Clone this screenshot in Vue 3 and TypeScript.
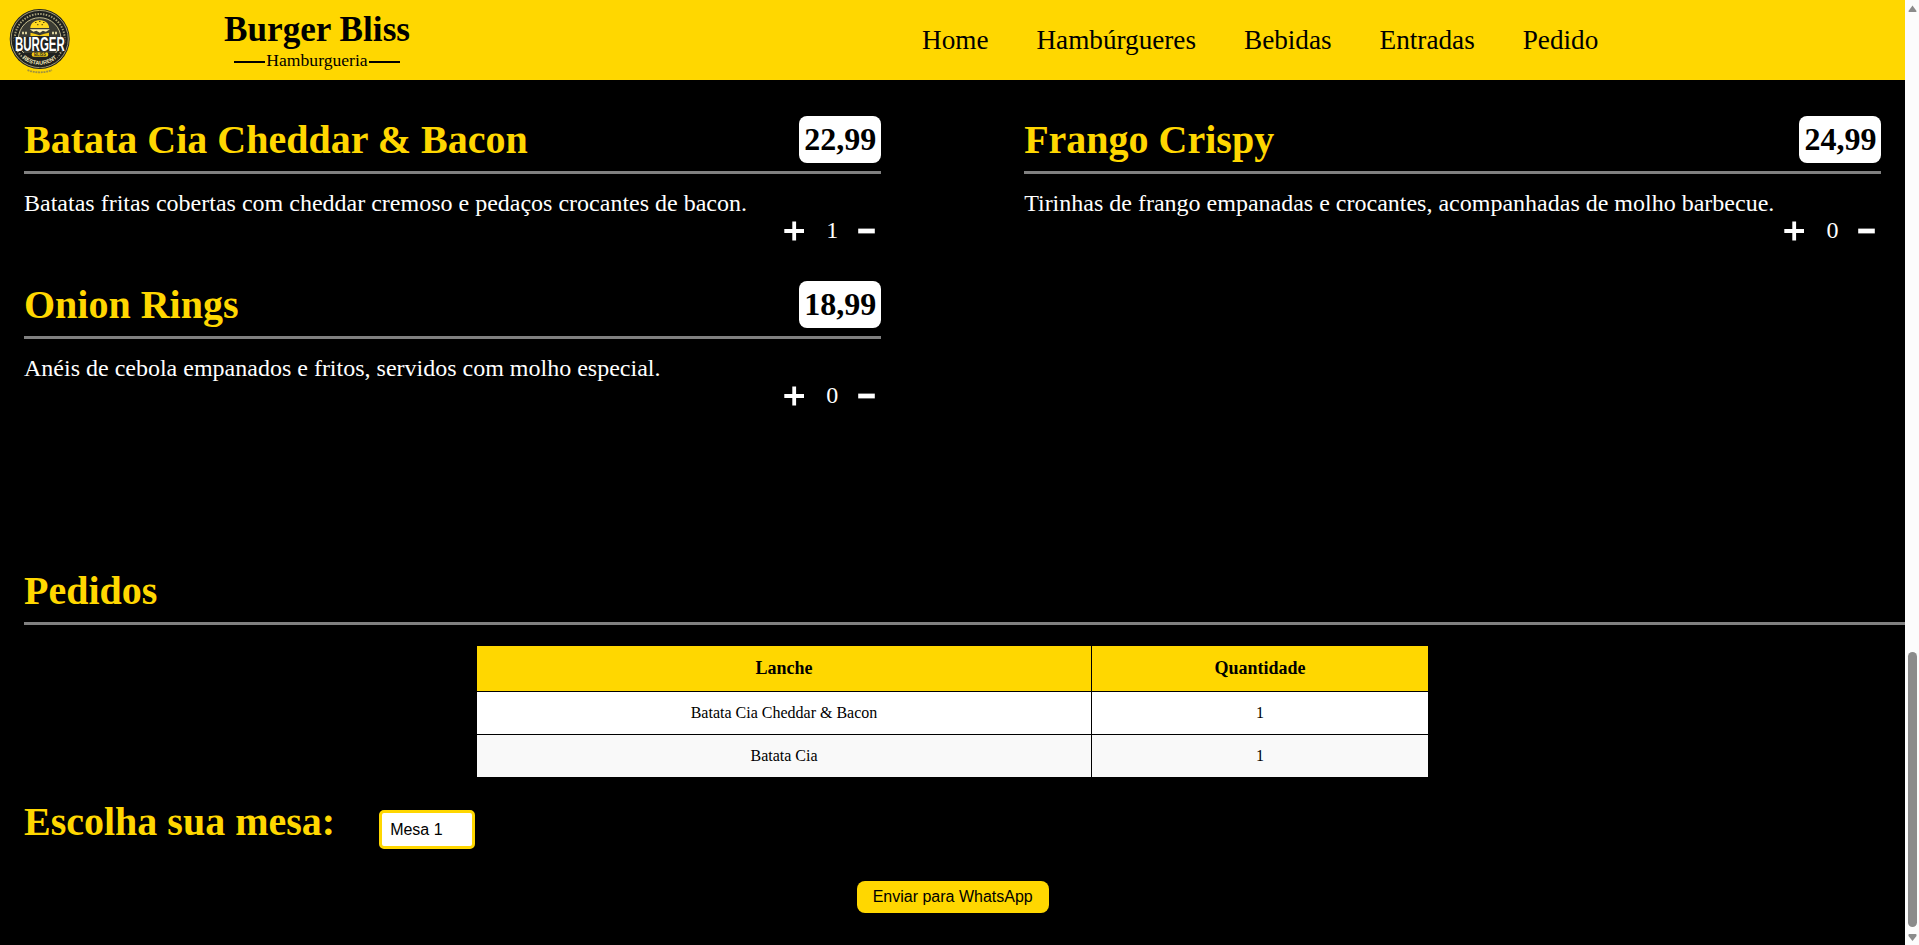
<script setup lang="ts">
import { ref } from 'vue'

interface Item {
  name: string
  price: string
  description: string
  quantity: number
}

interface Order {
  name: string
  quantity: number
}

const links: string[] = ['Home', 'Hambúrgueres', 'Bebidas', 'Entradas', 'Pedido']

const items = ref<Item[]>([
  {
    name: 'Batata Cia Cheddar & Bacon',
    price: '22,99',
    description: 'Batatas fritas cobertas com cheddar cremoso e pedaços crocantes de bacon.',
    quantity: 1,
  },
  {
    name: 'Frango Crispy',
    price: '24,99',
    description: 'Tirinhas de frango empanadas e crocantes, acompanhadas de molho barbecue.',
    quantity: 0,
  },
  {
    name: 'Onion Rings',
    price: '18,99',
    description: 'Anéis de cebola empanados e fritos, servidos com molho especial.',
    quantity: 0,
  },
])

const orders = ref<Order[]>([
  { name: 'Batata Cia Cheddar & Bacon', quantity: 1 },
  { name: 'Batata Cia', quantity: 1 },
])

const table = ref<string>('Mesa 1')

function change(item: Item, step: number): void {
  item.quantity = Math.max(0, item.quantity + step)
  const order = orders.value.find((o) => o.name === item.name)
  if (order) {
    order.quantity = item.quantity
  } else if (item.quantity > 0) {
    orders.value.push({ name: item.name, quantity: item.quantity })
  }
  orders.value = orders.value.filter((o) => o.quantity > 0)
}
</script>

<template>
  <div class="window">
    <div class="page">
      <header class="header">
        <svg class="logo" viewBox="0 0 80 80" width="80" height="80">
          <circle cx="39.7" cy="39" r="30" fill="#1f211f" />
          <circle cx="39.7" cy="39" r="28.6" fill="none" stroke="#d8cf9c" stroke-width="0.7" />
          <circle cx="39.7" cy="39" r="25" fill="none" stroke="#a39d78" stroke-width="2" stroke-dasharray="1.5 1.3" />
          <circle cx="39.7" cy="39" r="21.3" fill="#3a3b33" stroke="#d8cf9c" stroke-width="0.9" />
          <path d="M21 53l3.500 6 8 6.500 8 2 8-2 8-6.500 3.500-6z" fill="#1f211f" />
          <path d="M30.300 28c0-10.500 18.800-10.500 18.800 0z" fill="#ffd91f" />
          <path d="M35 22.500h1.500M39 21.500h1.500M43 22.500h1.500M37 24.700h1.500M41.500 24.700h1.500" stroke="#5a4b10" stroke-width="1" />
          <path d="M29.700 29.200h20.200l-4 2.500-3-1-3 2-3.500-2-3 1z" fill="#fff3b5" />
          <path d="M30.500 32.700l4 1 5 1.600 5-1.600 4.500-1v3.300h-18.500z" fill="#f5ca15" />
          <path d="M22 33h6M52 33h6" stroke="#d8cf9c" stroke-width="2.500" stroke-dasharray="2 1" />
          <path d="M14 37.500l25-1.300 26.500 1.300v13.200h-51.500z" fill="#1f211f" />
          <text class="logo-name" x="15" y="51.300" textLength="49.800" lengthAdjust="spacingAndGlyphs">BURGER</text>
          <rect x="31.700" y="52.200" width="16.500" height="4.600" rx="2" fill="#f2cb15" />
          <text class="logo-bliss" x="34" y="56.100" textLength="12" lengthAdjust="spacingAndGlyphs">BLISS</text>
          <path id="logo-bottom" d="M19.200 54.600a25.800 25.800 0 0 0 41 0" fill="none" />
          <text class="logo-ring">
            <textPath href="#logo-bottom" startOffset="50%" text-anchor="middle">RESTAURENT</textPath>
          </text>
          <path d="M27.500 70.200q12 4.200 24.500 0" fill="none" stroke="#a1933f" stroke-width="1.800" stroke-dasharray="2 0.700" />
        </svg>
        <div class="brand">
          <h1 class="brand-name">Burger Bliss</h1>
          <p class="brand-sub">Hamburgueria</p>
        </div>
        <nav class="nav">
          <a v-for="link in links" :key="link" class="nav-link">{{ link }}</a>
        </nav>
      </header>

      <main>
        <section class="menu">
          <article v-for="item in items" :key="item.name" class="item">
            <div class="item-head">
              <h2 class="title">{{ item.name }}</h2>
              <span class="price">{{ item.price }}</span>
            </div>
            <p class="description">{{ item.description }}</p>
            <div class="counter">
              <button class="step" aria-label="Adicionar" @click="change(item, 1)">
                <svg width="20" height="20" viewBox="0 0 20 20">
                  <path d="M0.300 10h19.700M10.200 0.500v19" stroke="#fff" stroke-width="3.800" />
                </svg>
              </button>
              <span class="quantity">{{ item.quantity }}</span>
              <button class="step" aria-label="Remover" @click="change(item, -1)">
                <svg width="20" height="20" viewBox="0 0 20 20">
                  <path d="M2.200 10h16.600" stroke="#fff" stroke-width="4.800" />
                </svg>
              </button>
            </div>
          </article>
        </section>

        <section class="orders">
          <h2 class="title orders-title">Pedidos</h2>
          <table class="orders-table">
            <thead>
              <tr>
                <th class="col-name">Lanche</th>
                <th>Quantidade</th>
              </tr>
            </thead>
            <tbody>
              <tr v-for="order in orders" :key="order.name">
                <td>{{ order.name }}</td>
                <td>{{ order.quantity }}</td>
              </tr>
            </tbody>
          </table>
        </section>

        <section class="seat">
          <h2 class="title">Escolha sua mesa:</h2>
          <select v-model="table" class="select">
            <option v-for="n in 5" :key="n">Mesa {{ n }}</option>
          </select>
        </section>
        <button class="send">Enviar para WhatsApp</button>
      </main>
    </div>

    <div class="scrollbar">
      <svg width="14" height="945" viewBox="0 0 14 945" fill="#8b8b8b">
        <path d="M7.500 5.500l4 5.500q.3 1-.8 1h-6.400q-1.100 0-.8-1z" />
        <rect x="3" y="652" width="9" height="275" rx="4.500" />
        <path d="M7.500 941l4-5q.5-2-.8-2h-6.400q-1.300 0-.8 2z" />
      </svg>
    </div>
  </div>
</template>

<style>
body {
  margin: 0;
  background: #000;
  overflow: hidden;
}
</style>

<style scoped>
.window {
  display: flex;
  height: 945px;
  overflow: hidden;
  font-family: 'Liberation Serif', 'Times New Roman', serif;
}

.page {
  flex: 1;
  background: #000;
  color: #fff;
}

.scrollbar {
  width: 14px;
  background: #fcfcfc;
}

.header {
  display: flex;
  align-items: center;
  height: 80px;
  background: #ffd700;
  color: #000;
}

.logo {
  margin-right: 144px;
  overflow: visible;
}

.logo-name {
  font: bold 20px 'Liberation Sans', Arial, sans-serif;
  fill: #fff;
}

.logo-bliss {
  font: bold 4.500px 'Liberation Sans', Arial, sans-serif;
  fill: #222;
}

.logo-ring {
  font: bold 5.600px 'Liberation Sans', Arial, sans-serif;
  fill: #eee6bb;
}

.brand {
  width: 186px;
  display: flex;
  flex-direction: column;
  align-items: center;
}

.brand-name {
  margin: 0;
  font-size: 35.2px;
  line-height: 40px;
  white-space: nowrap;
}

.brand-sub {
  display: flex;
  align-items: center;
  gap: 1px;
  margin: 0;
  font-size: 17.6px;
  line-height: 20px;
}

.brand-sub::before,
.brand-sub::after {
  content: '';
  width: 31px;
  height: 2px;
  margin-top: 3px;
  background: #000;
}

.nav {
  display: flex;
  gap: 48px;
  margin-left: 512px;
  font-size: 27.2px;
  line-height: 31px;
}

.menu {
  display: grid;
  grid-template-columns: 857.25px 857.25px;
  column-gap: 142.9px;
  grid-auto-rows: 165px;
  height: 456px;
  padding: 36px 24px 0;
  box-sizing: border-box;
}

.item-head {
  display: flex;
  justify-content: space-between;
  height: 55px;
  border-bottom: 3px solid #808080;
}

.title {
  margin: 0;
  color: #ffd700;
  font-size: 40px;
  line-height: 47px;
}

.price {
  box-sizing: border-box;
  height: 47px;
  padding: 5px;
  border-radius: 8px;
  background: #fff;
  color: #000;
  font-size: 32px;
  font-weight: bold;
  line-height: 37px;
}

.description {
  margin: 16px 0 0;
  font-size: 24px;
  line-height: 27px;
}

.counter {
  display: flex;
  justify-content: flex-end;
  align-items: center;
  height: 27px;
  padding-right: 5px;
}

.step {
  display: flex;
  padding: 0;
  border: 0;
  background: none;
}

.quantity {
  width: 12px;
  margin: 0 18px 0 22px;
  font-size: 24px;
  line-height: 27px;
}

.orders {
  padding: 31px 0 0 24px;
}

.orders-title {
  height: 55px;
  border-bottom: 3px solid #808080;
}

.orders-table {
  width: 953px;
  margin: 20px 0 0 452px;
  border-collapse: collapse;
  table-layout: fixed;
  color: #000;
  text-align: center;
}

.orders-table th,
.orders-table td {
  padding: 12px;
  border: 1px solid #000;
}

.orders-table th {
  background: #ffd700;
  font-size: 18px;
  line-height: 21px;
}

.orders-table td {
  background: #fff;
  font-size: 16px;
  line-height: 18px;
}

.orders-table tr:nth-child(even) td {
  background: #f9f9f9;
}

.col-name {
  width: 590px;
}

.seat {
  display: flex;
  align-items: flex-start;
  gap: 44px;
  padding: 20px 24px 0;
}

.select {
  appearance: none;
  box-sizing: border-box;
  width: 96px;
  height: 39px;
  margin-top: 12px;
  padding: 0 8px;
  border: 3px solid #ffd700;
  border-radius: 5px;
  background: #fff;
  color: #000;
  font: 16px 'Liberation Sans', Arial, sans-serif;
}

.send {
  display: block;
  width: 192px;
  height: 32px;
  margin: 32px auto 0;
  padding: 0;
  border: 0;
  border-radius: 8px;
  background: #ffd700;
  color: #000;
  font: 16px 'Liberation Sans', Arial, sans-serif;
}
</style>
